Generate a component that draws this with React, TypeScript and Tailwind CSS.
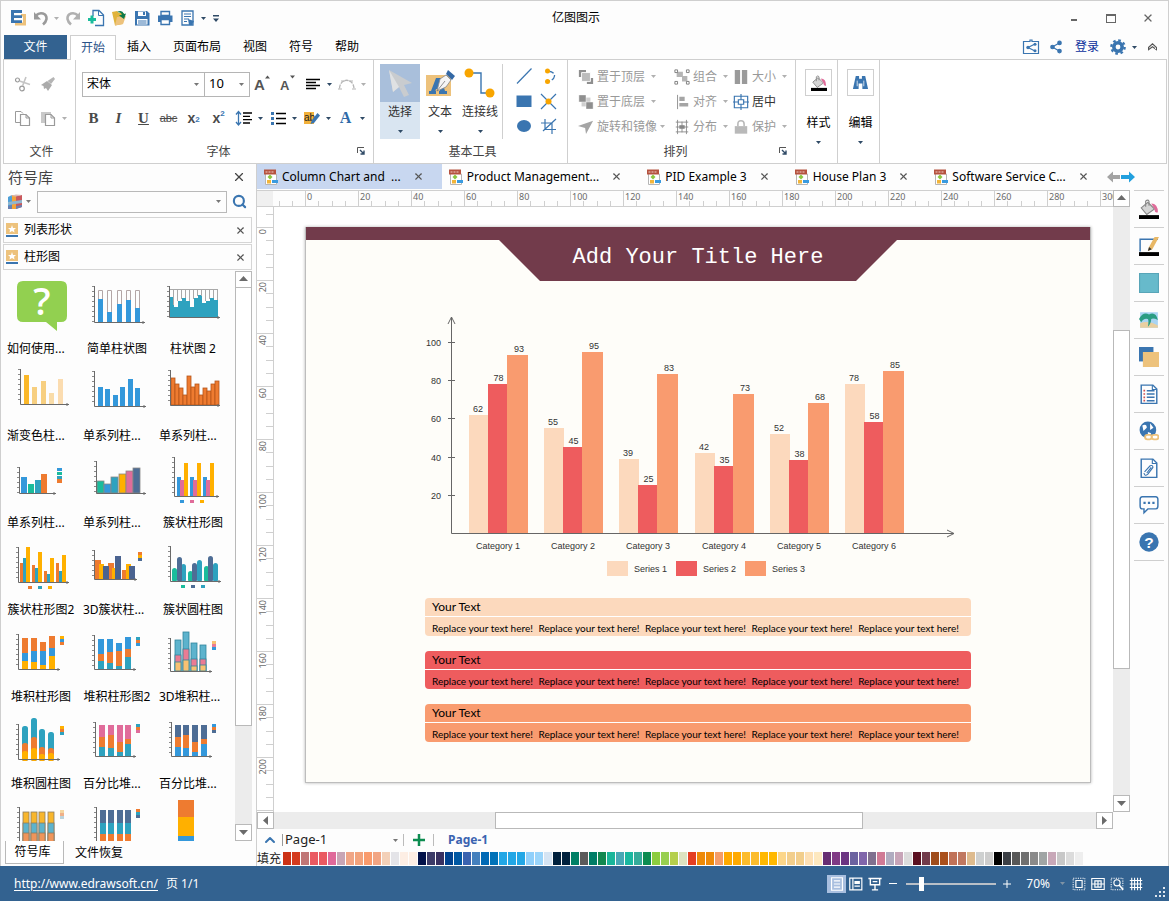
import { Fragment, useState } from 'react';
import type { ReactNode } from 'react';
import { ChevronUp, Search, Settings, Share2, X } from 'lucide-react';

const BLUE = '#3a75b0';
const GREY = '#9a9a9a';
const DARK = '#555555';

type Rect = [number, number, number, number, string];

function Caret({ className = 'text-[#2f4a66]' }: { className?: string }) {
  return (
    <svg width="5" height="3" viewBox="0 0 5 3" className={`shrink-0 ${className}`} aria-hidden="true">
      <path d="M0 0H5L2.5 3Z" fill="currentColor" />
    </svg>
  );
}

function Icon({ size = 18, children }: { size?: number; children: ReactNode }) {
  return (
    <svg width={size} height={size} viewBox="0 0 18 18" fill="none" className="shrink-0" aria-hidden="true">
      {children}
    </svg>
  );
}

function ToolButton({ label, children, className = 'w-[25px]' }: { label: string; children: ReactNode; className?: string }) {
  return (
    <button type="button" aria-label={label} className={`flex h-6 shrink-0 items-center justify-center ${className}`}>
      {children}
    </button>
  );
}

function CaretButton({ label, dim }: { label: string; dim?: boolean }) {
  return (
    <ToolButton label={label} className="w-[9px]">
      <Caret className={dim ? 'text-[#b0b0b0]' : 'text-[#2f4a66]'} />
    </ToolButton>
  );
}

/* ---------- title bar ---------- */

function TitleBar() {
  return (
    <header className="flex h-[34px] items-center text-xs text-black">
      <div className="flex flex-1 basis-0 items-center pl-[5px]">
        <span className="flex w-[23px] justify-center">
          <Icon>
            <path d="M12 5H17V16.500H6V13.500H14V7.500H12Z" fill="#edc27c" />
            <path d="M2 1H13V4H5V6.200H13V9H5V11.200H13V14H2Z" fill={BLUE} />
          </Icon>
        </span>
        <ToolButton label="撤销" className="w-[23px]">
          <Icon>
            <path d="M4 6.500C8 2.500 15 4 14.500 10Q14 13 11 15.500" stroke={GREY} strokeWidth="2.600" />
            <path d="M2 3V10.500H9Z" fill={GREY} />
          </Icon>
        </ToolButton>
        <CaretButton label="撤销列表" dim />
        <ToolButton label="重做" className="w-[23px]">
          <Icon>
            <path d="M14 6.500C10 2.500 3 4 3.500 10Q4 13 7 15.500" stroke="#b0b0b0" strokeWidth="2.600" />
            <path d="M16 3V10.500H9Z" fill="#b0b0b0" />
          </Icon>
        </ToolButton>
        <ToolButton label="新建" className="w-[23px]">
          <Icon>
            <path d="M6 7V1.500H12L16.500 6V16.500H8" stroke={BLUE} strokeWidth="1.300" />
            <path d="M11.500 1.500V6.500H16.500" stroke={BLUE} />
            <path d="M1 10.500H9M5 6.500V14.500" stroke="#1abc9c" strokeWidth="3" />
          </Icon>
        </ToolButton>
        <ToolButton label="打开" className="w-[23px]">
          <Icon>
            <path d="M2 3L7 2L9 4L14 4L13 15L5 16.500Z" fill="#e0b33c" />
            <path d="M5 16.500L7 8L16 7L13 15Z" fill="#edc27c" />
            <path d="M7 3Q12 0 14 5L16 4.500L14 10L9 6.500L12 5.500Q11 3 7 3Z" fill="#0d7a4a" />
          </Icon>
        </ToolButton>
        <ToolButton label="保存" className="w-[23px]">
          <Icon>
            <path d="M2 2H14L16.500 4.500V16.500H2Z" fill={BLUE} />
            <path d="M5 2.500H13V7H5Z" fill="white" />
            <path d="M10 3H12V6H10Z" fill={BLUE} />
            <path d="M4 10H14.500V15.500H4Z" fill="white" />
            <path d="M5 12H13.500M5 14H13.500" stroke={BLUE} />
          </Icon>
        </ToolButton>
        <ToolButton label="打印" className="w-[23px]">
          <Icon>
            <path d="M2 6.500H16.500V13H2Z" fill={BLUE} />
            <path d="M5 2.500H13.500V6.500H5Z" stroke={BLUE} strokeWidth="1.400" />
            <path d="M5 10.500H13.500V15.500H5Z" fill="white" stroke={BLUE} strokeWidth="1.400" />
          </Icon>
        </ToolButton>
        <ToolButton label="预览" className="w-[23px]">
          <Icon>
            <path d="M3 2H14V16H3Z" stroke={BLUE} strokeWidth="1.300" />
            <path d="M5 5H12M5 7.500H12M5 10H10M5 12.500H8" stroke={BLUE} />
            <path d="M9 10L15 12L13 16L10 16Z" fill={BLUE} />
          </Icon>
        </ToolButton>
        <CaretButton label="预览选项" />
        <ToolButton label="自定义快速访问工具栏" className="w-4">
          <svg width="6" height="7" viewBox="0 0 6 7" aria-hidden="true">
            <path d="M0 0H6V1.500H0ZM0 3.500H6L3 7Z" fill="#2f4a66" />
          </svg>
        </ToolButton>
      </div>
      <h1 className="mr-5">亿图图示</h1>
      <div className="flex flex-1 basis-0 items-center justify-end pr-[2px] text-[#666]">
        <button type="button" aria-label="最小化" className="flex w-[37px] justify-center"><span className="mt-[3px] h-[2px] w-[6px] bg-[#666]" /></button>
        <button type="button" aria-label="最大化" className="flex w-[37px] justify-center"><span className="h-[9px] w-[10px] border border-t-2 border-[#666]" /></button>
        <button type="button" aria-label="关闭" className="flex w-[37px] justify-center"><X size={12} strokeWidth={2.6} /></button>
      </div>
    </header>
  );
}

/* ---------- menu tabs ---------- */

const menus = ['开始', '插入', '页面布局', '视图', '符号', '帮助'];

function MenuTabs() {
  const [active, setActive] = useState('开始');
  return (
    <nav className="flex h-6 px-[3px] text-xs text-black">
      <button type="button" className="mr-[3px] w-[63px] bg-[#336290] text-white">文件</button>
      {menus.map(m => (
        <button
          key={m}
          type="button"
          onClick={() => setActive(m)}
          className={m === active
            ? 'relative z-10 -mb-px border border-b-0 border-[#cfcfcf] bg-white px-[10px] text-[#2b5288]'
            : 'px-[11px]'}
        >
          {m}
        </button>
      ))}
      <div className="ml-auto flex items-center">
        <ToolButton label="共享文件夹">
          <Icon>
            <path d="M1.500 3.500H8V2H10V3.500H16.500V15.500H1.500Z" stroke={BLUE} strokeWidth="1.200" />
            <path d="M13 6L6 9.500L13 13" stroke={BLUE} strokeWidth="1.200" />
            <circle cx="6" cy="9.500" r="1.700" fill={BLUE} /><circle cx="13" cy="6.200" r="1.500" fill={BLUE} /><circle cx="13" cy="12.800" r="1.500" fill={BLUE} />
          </Icon>
        </ToolButton>
        <ToolButton label="分享"><Share2 size={14} color={BLUE} fill={BLUE} /></ToolButton>
        <a href="#login" className="mx-[6px] text-[#0a2f9c]">登录</a>
        <ToolButton label="设置">
          <Icon size={16}>
            <circle cx="9" cy="9" r="4.700" stroke={BLUE} strokeWidth="4" />
            <circle cx="9" cy="9" r="7.500" stroke={BLUE} strokeWidth="2.600" strokeDasharray="2.950 2.940" />
          </Icon>
        </ToolButton>
        <CaretButton label="设置选项" />
        <ToolButton label="收起功能区" className="w-[26px]">
          <svg width="9" height="8" viewBox="0 0 9 8" fill="none" stroke="#555" strokeWidth="1.100" aria-hidden="true">
            <path d="M0.500 4.500L4.500 0.800L8.500 4.500V6.800L4.500 3.800L0.500 6.800Z" />
          </svg>
        </ToolButton>
      </div>
    </nav>
  );
}

/* ---------- ribbon ---------- */

function Launcher() {
  return (
    <button type="button" aria-label="更多设置" className="absolute right-2 bottom-2">
      <svg width="8" height="8" viewBox="0 0 8 8" fill="none" stroke="#555" aria-hidden="true">
        <path d="M0.500 6V0.500H7" /><path d="M3 3L7 7M7 3.500V7H3.500" stroke="#2f4a66" strokeWidth="1.400" />
      </svg>
    </button>
  );
}

function Group({ title, launcher, children }: { title?: string; launcher?: boolean; children: ReactNode }) {
  return (
    <section className="relative flex flex-col border-r border-[#cfcfcf]">
      <div className="h-[79px]">{children}</div>
      {title && <h2 className={`h-6 text-center text-xs leading-[26px] text-[#444] ${launcher ? 'pr-3' : 'pl-1'}`}>{title}</h2>}
      {launcher && <Launcher />}
    </section>
  );
}

function FileGroup() {
  return (
    <Group title="文件">
      <div className="flex w-[71px] flex-col pt-[7px] pl-[6px]">
        <div className="flex h-[34px] items-center">
          <ToolButton label="剪切">
            <Icon>
              <circle cx="3.500" cy="5" r="2" stroke={GREY} strokeWidth="1.200" /><circle cx="8" cy="13.500" r="2.300" stroke={GREY} strokeWidth="1.200" />
              <path d="M5.500 6L16 9.500M8.500 11L12 2" stroke="#c4c4c4" strokeWidth="1.600" />
            </Icon>
          </ToolButton>
          <ToolButton label="格式刷">
            <Icon>
              <path d="M14.500 2L16 4L12 9L8.500 6Z" fill="#b5b5b5" /><path d="M8 6L13 10L9 16L7 13L5 14L4.500 11L2 10Z" fill="#ababab" />
            </Icon>
          </ToolButton>
        </div>
        <div className="flex h-[34px] items-center">
          <ToolButton label="复制">
            <Icon>
              <path d="M6 13.500H1.500V2.500H7L9 4.500" stroke={GREY} /><path d="M6.500 5.500H12L15.500 9V16.500H6.500Z" stroke={GREY} strokeWidth="1.200" /><path d="M12 5.500V9H15.500" stroke={GREY} />
            </Icon>
          </ToolButton>
          <ToolButton label="粘贴">
            <Icon>
              <path d="M2 3H12V5H6V14H2Z" fill="#c9c9c9" /><path d="M6.500 5.500H12L15.500 9V16.500H6.500Z" fill="white" stroke={GREY} strokeWidth="1.200" /><path d="M12 5.500V9H15.500" stroke={GREY} />
            </Icon>
          </ToolButton>
          <CaretButton label="粘贴选项" dim />
        </div>
      </div>
    </Group>
  );
}

function Combo({ label, value, className }: { label: string; value: string; className: string }) {
  return (
    <div className={`relative flex items-center border border-[#b5b5b5] ${className}`}>
      <select aria-label={label} className="h-full w-full appearance-none bg-transparent pl-1 outline-none">
        <option>{value}</option>
      </select>
      <span className="pointer-events-none absolute right-[5px]"><Caret className="text-[#777]" /></span>
    </div>
  );
}

function FontGroup() {
  return (
    <Group title="字体" launcher>
      <div className="flex w-[297px] flex-col pt-[7px] pl-[5px] text-black">
        <div className="flex h-[34px] items-center pl-px">
          <Combo label="字体名称" value="宋体" className="h-[25px] w-[123px] text-xs" />
          <Combo label="字号" value="10" className="-ml-px h-[25px] w-[46px] text-[13px]" />
          <ToolButton label="增大字号">
            <Icon><text x="0" y="15" fontSize="15" fontWeight="bold" fontFamily="Liberation Sans" fill="#555">A</text><path d="M11 3.500L13.500 0.500L16 3.500Z" fill={DARK} /></Icon>
          </ToolButton>
          <ToolButton label="减小字号">
            <Icon><text x="1" y="15" fontSize="13" fontWeight="bold" fontFamily="Liberation Sans" fill="#555">A</text><path d="M11 0.500H16L13.500 3.500Z" fill={DARK} /></Icon>
          </ToolButton>
          <ToolButton label="对齐方式">
            <Icon><path d="M2 4.500H16M2 7.500H12M2 10.500H16M2 13.500H12" stroke="black" strokeWidth="1.300" /></Icon>
          </ToolButton>
          <CaretButton label="对齐选项" />
          <ToolButton label="弧形文字">
            <Icon><path d="M1.500 13.500C2 2.500 15.500 2.500 16 13.500" stroke="#b5b5b5" strokeWidth="1.300" strokeDasharray="4 1" /><path d="M0 14H4M14 14H18M3 6H7M11 6H15" stroke="#b5b5b5" /></Icon>
          </ToolButton>
          <CaretButton label="弧形选项" dim />
        </div>
        <div className="flex h-[34px] items-center font-['Liberation_Serif',serif] text-[15px] text-[#4a4a4a]">
          <ToolButton label="加粗"><b>B</b></ToolButton>
          <ToolButton label="倾斜"><b className="italic">I</b></ToolButton>
          <ToolButton label="下划线"><b className="font-semibold underline">U</b></ToolButton>
          <ToolButton label="删除线"><s className="font-['Liberation_Sans',sans-serif] text-[11px]">abc</s></ToolButton>
          <ToolButton label="下标"><b className="font-['Liberation_Sans',sans-serif] text-sm">x</b><sub className="font-['Liberation_Sans',sans-serif] text-[8px] font-bold text-[#3a75b0]">2</sub></ToolButton>
          <ToolButton label="上标"><b className="font-['Liberation_Sans',sans-serif] text-sm">x</b><sup className="font-['Liberation_Sans',sans-serif] text-[8px] font-bold text-[#3a75b0]">2</sup></ToolButton>
          <ToolButton label="行距">
            <Icon><path d="M3.500 3V15.500M1 5.500L3.500 2.500L6 5.500M1 13L3.500 16L6 13" stroke={BLUE} strokeWidth="1.300" /><path d="M8 4H17M8 7.300H15M8 10.600H17M8 14H15" stroke="black" strokeWidth="1.300" /></Icon>
          </ToolButton>
          <CaretButton label="行距选项" />
          <ToolButton label="项目符号">
            <Icon><path d="M2 3H5V6H2ZM2 8H5V11H2ZM2 13H5V16H2Z" fill={BLUE} /><path d="M7 4.500H17M7 9.500H17M7 14.500H17" stroke="black" strokeWidth="1.300" /></Icon>
          </ToolButton>
          <CaretButton label="项目符号选项" />
          <ToolButton label="突出显示">
            <Icon><path d="M1 3H11V15H1Z" fill="#f2b13a" /><text x="1" y="12" fontSize="10" fontFamily="Liberation Sans" fill="#222">ab</text><path d="M14.500 4L17 6.500L11 14L7.500 15L9 11Z" fill={BLUE} /></Icon>
          </ToolButton>
          <CaretButton label="突出显示选项" />
          <ToolButton label="字体颜色"><b className="text-base text-[#2f6aa8]">A</b></ToolButton>
          <CaretButton label="字体颜色选项" />
        </div>
      </div>
    </Group>
  );
}

function BigTool({ label, selected, children }: { label: string; selected?: boolean; children: ReactNode }) {
  return (
    <button type="button" aria-pressed={selected} className={`flex h-[75px] w-10 flex-col items-center text-xs text-[#333] ${selected ? 'bg-[#d9e5f1]' : ''}`}>
      <span className={`flex h-[38px] w-10 items-center justify-center ${selected ? 'bg-[#a9bfdb]' : ''}`}>{children}</span>
      <span className="mb-2 h-5 leading-5 whitespace-nowrap">{label}</span>
      <Caret />
    </button>
  );
}

function ToolsGroup() {
  return (
    <Group title="基本工具">
      <div className="flex w-[193px] pt-1 pl-[6px]">
        <BigTool label="选择" selected>
          <svg width="28" height="30" viewBox="0 0 28 30" aria-hidden="true">
            <path d="M3 2L26 15L18 17L23 27L18 29L13 19L7 24Z" fill="#c9cccf" /><path d="M3 2L7 24L13 19Z" fill="#dfe1e3" />
          </svg>
        </BigTool>
        <BigTool label="文本">
          <svg width="30" height="30" viewBox="0 0 30 30" aria-hidden="true">
            <path d="M1 7H26V28H1Z" fill="#edc27c" />
            <path d="M4 26V23H6L11 10H16L20 23H22V26H14V23H15L14.500 21H11L10.500 23H11V26Z" fill={BLUE} />
            <path d="M12 23L15 11L21 7L26 12L21 19Z" fill="#f5f5f5" stroke="#888" strokeWidth="0.800" />
            <path d="M12 23L20 13" stroke="#777" strokeWidth="0.800" /><path d="M23 2L30 8L27 12L21 6Z" fill="#3468a5" />
          </svg>
        </BigTool>
        <BigTool label="连接线">
          <svg width="32" height="32" viewBox="0 0 32 32" aria-hidden="true">
            <path d="M5 6H17V26H26" fill="none" stroke={BLUE} strokeWidth="1.400" />
            <circle cx="5" cy="6" r="4.500" fill="#f8a500" /><circle cx="26" cy="26" r="4.500" fill="#f8a500" />
          </svg>
        </BigTool>
        <div className="ml-[2px] grid grid-cols-2 border-l border-[#cfcfcf] pl-2">
          <ToolButton label="直线"><Icon><path d="M2 16.500L16.500 1.500" stroke={BLUE} strokeWidth="1.200" /></Icon></ToolButton>
          <ToolButton label="弧线">
            <Icon><path d="M8 4Q15 5 14.500 9Q14 13 8 14.500" stroke={BLUE} strokeWidth="1.300" strokeDasharray="6 2" /><circle cx="7.500" cy="4" r="2.500" fill="#f8a500" /><circle cx="7.500" cy="14.500" r="2.500" fill="#f8a500" /></Icon>
          </ToolButton>
          <ToolButton label="矩形"><Icon><path d="M1.500 3.500H16.500V15H1.500Z" fill={BLUE} /></Icon></ToolButton>
          <ToolButton label="连接点">
            <Icon><path d="M1 2L16 17M16 2L1 17" stroke={BLUE} strokeWidth="1.200" /><circle cx="8.500" cy="9.500" r="3" fill="#f8a500" /></Icon>
          </ToolButton>
          <ToolButton label="椭圆"><Icon><ellipse cx="9" cy="9" rx="7" ry="6" fill={BLUE} /></Icon></ToolButton>
          <ToolButton label="裁剪"><Icon><path d="M1 6H12V17M5 2V12.500H16M3 14L16 2" stroke={BLUE} strokeWidth="1.200" /></Icon></ToolButton>
        </div>
      </div>
    </Group>
  );
}

const arrangeRows: { label: string; on?: boolean; icon: ReactNode }[][] = [
  [
    { label: '置于顶层', icon: <><path d="M1 1H9V9H1ZM10 10H17V17H10Z" fill="#8f8f8f" /><path d="M4 4H14V14H4Z" fill="#bcbcbc" stroke="white" /></> },
    { label: '组合', icon: <><path d="M3 3H10V9H3ZM9 8H15V14H9Z" fill="#b5b5b5" /><path d="M1 1H4V4H1ZM14 1H17V4H14ZM1 14H4V17H1ZM14 14H17V17H14Z" fill="white" stroke="#777" /></> },
    { label: '大小', icon: <path d="M2 1H8V17H2ZM10 1H16V17H10Z" fill="#9a9a9a" /> },
  ],
  [
    { label: '置于底层', icon: <><path d="M4 4H14V14H4Z" fill="#cfcfcf" /><path d="M1 1H9V9H1ZM9 9H17V17H9Z" fill="#8f8f8f" stroke="white" strokeWidth="0.500" /></> },
    { label: '对齐', icon: <><path d="M4 1V17" stroke="#888" /><path d="M6 3H12V8H6ZM6 10H16V14H6Z" fill="#a5a5a5" /></> },
    { label: '居中', on: true, icon: <><path d="M1.500 2.500H16.500V15.500H1.500ZM6 6.500H12V11.500H6Z" stroke={BLUE} strokeWidth="1.300" /><path d="M9 0V6.500M9 11.500V18M0 9H6M12 9H18" stroke={BLUE} strokeWidth="1.300" /></> },
  ],
  [
    { label: '旋转和镜像', icon: <path d="M0 8L17 2L9 17L8 10Z" fill="#a5a5a5" /> },
    { label: '分布', icon: <><path d="M2 3.500H16M2 14.500H16M4 1V17M14 1V17" stroke="#888" /><path d="M6 7H12V11H6Z" fill="#888" /><path d="M9 3V15M2 9H16" stroke="#888" /></> },
    { label: '保护', icon: <><path d="M2 8H16V16.500H2Z" fill="#b9b9b9" /><path d="M5.500 8V5.500Q5.500 2 9 2Q12.500 2 12.500 5.500V8" stroke="#b9b9b9" strokeWidth="1.800" /></> },
  ],
];

function ArrangeGroup() {
  return (
    <Group title="排列" launcher>
      <div className="grid w-[227px] grid-cols-[96px_59px_62px] pt-1 pl-[10px]">
        {arrangeRows.flat().map(item => (
          <button key={item.label} type="button" className={`flex h-[25px] items-center gap-[3px] text-xs whitespace-nowrap ${item.on ? 'text-[#333]' : 'text-[#999]'}`}>
            <Icon size={16}>{item.icon}</Icon>
            {item.label}
            {!item.on && <Caret className={item.label.length > 4 ? 'text-[#b0b0b0]' : 'ml-[3px] text-[#b0b0b0]'} />}
          </button>
        ))}
      </div>
    </Group>
  );
}

function BucketArt() {
  return (
    <>
      <path d="M2 8L8 3L14 9L7 14Z" fill="#d5d5d5" stroke="#888" />
      <path d="M6 7V2Q8 0 9 2V6" stroke="#888" />
      <path d="M11 4Q17 4 17 12Q14 13 14 9Z" fill="#e06c9a" />
      <path d="M0 14.500H18V18H0Z" fill="black" />
    </>
  );
}

function SideGroup({ label, children }: { label: string; children: ReactNode }) {
  return (
    <Group>
      <button type="button" className="flex w-[41px] flex-col items-center pt-[9px] text-xs text-black">
        <span className="ml-1 flex size-[27px] items-center justify-center border border-[#cfcfcf]">{children}</span>
        <span className="mt-[17px] mb-2 ml-1 h-5 leading-5">{label}</span>
        <span className="ml-1"><Caret /></span>
      </button>
    </Group>
  );
}

function Ribbon() {
  return (
    <div className="mr-[1px] ml-[2px] flex border border-[#cfcfcf] bg-white">
      <FileGroup />
      <FontGroup />
      <ToolsGroup />
      <ArrangeGroup />
      <SideGroup label="样式"><Icon size={16}><BucketArt /></Icon></SideGroup>
      <SideGroup label="编辑">
        <Icon size={17}><path d="M4 2H7.500V5H10.500V2H14L17 16H11V10H7V16H1Z" fill={BLUE} /><path d="M5.500 7V13M12.500 7V13" stroke="white" strokeWidth="0.800" /></Icon>
      </SideGroup>
    </div>
  );
}

/* ---------- symbol library ---------- */

const B = '#3498db', T = '#2ea2bf', O = '#ee7b30', Y = '#ffb000', P = '#e06c9a', N = '#4e6d95', G = '#1abc9c';

type Thumb = { label: string; axis?: [number, number, number, number]; rects?: Rect[]; round?: boolean; stroke?: string; art?: ReactNode };

// a row of plain bars standing on one base line
function bars(xs: number[], tops: number[], base: number, w: number, fill: string | string[]): Rect[] {
  return xs.map((x, i) => [x, tops[i], w, base - tops[i], typeof fill === 'string' ? fill : fill[i]]);
}

// bars cut into layers, each layer given by its tops
function stacks(xs: number[], layers: [string, number[]][], base: number): Rect[] {
  return layers.flatMap(([fill, tops]) => bars(xs, tops, base, 6, fill));
}

function legend(x: number, y: number, fills: string[], down = true): Rect[] {
  return fills.map((f, i) => (down ? [x, y + i * 3, 4, 3, f] : [x + i * 10, y, 4, 3, f]) as Rect);
}

const steps = (from: number, step: number, n: number) => Array.from({ length: n }, (_, i) => from + i * step);

const thumbs: Thumb[] = [
  {
    label: '如何使用...',
    art: (
      <>
        <path d="M20 6H58Q64 6 64 12V41Q64 47 58 47H54V56L43 47H20Q14 47 14 41V12Q14 6 20 6Z" fill="#92d050" />
        <text x="39" y="40" fontSize="38" fontFamily="Open Sans" fontWeight="600" textAnchor="middle" fill="white">?</text>
      </>
    ),
  },
  {
    label: '简单柱状图', axis: [15, 11, 66, 47],
    rects: bars([19, 28, 38, 47, 56], [24, 37, 29, 25, 33], 47, 5, B),
    art: <path d="M19.500 24V15.500H23.500V24M28.500 37V15.500H32.500V37M38.500 29V15.500H42.500V29M47.500 25V15.500H51.500V25M56.500 33V15.500H60.500V33" stroke="#b3a6a6" fill="none" />,
  },
  {
    label: '柱状图 2', axis: [14, 11, 65, 42],
    rects: bars(steps(15, 4, 12), [22, 32, 26, 23, 26, 32, 23, 20, 28, 26, 23, 25], 42, 4, T),
    art: <path d="M15 14.500H63M18.500 14V30M22.500 14V26M26.500 14V24M30.500 14V23M34.500 14V26M38.500 14V24M42.500 14V21M46.500 14V21M50.500 14V26M54.500 14V24M58.500 14V23M62.500 14V25" stroke="#a9a9a9" />,
  },
  { label: '渐变色柱...', axis: [17, 7, 66, 42], rects: bars([21, 29, 38, 46, 55], [13, 25, 19, 31, 17], 42, 5, ['#fbb829', '#f7cf80', '#f7cf80', '#f9dca8', '#fbdcb0']) },
  { label: '单系列柱...', axis: [15, 9, 67, 44], rects: bars([19, 26, 34, 41, 49, 56], [25, 27, 33, 25, 17, 26], 44, 5, B) },
  { label: '单系列柱...', axis: [15, 8, 65, 43], stroke: '#b4551a', rects: bars(steps(16, 4, 12), [16, 22, 26, 33, 14, 25, 22, 33, 26, 29, 22, 19], 43, 4, O) },
  {
    label: '单系列柱...', axis: [16, 18, 53, 44],
    rects: [...bars([18, 25, 32, 38], [28, 35, 31, 25], 44, 6, [B, G, T, O]), [54, 19, 5, 3, B], [54, 23, 5, 3, G], [54, 27, 5, 3, T], [54, 30, 5, 4, O]],
  },
  { label: '单系列柱...', axis: [17, 12, 67, 44], stroke: '#888888', rects: bars([18, 25, 32, 40, 47, 54], [32, 35, 28, 25, 22, 19], 44, 7, [G, B, T, Y, P, N]) },
  {
    label: '簇状柱形图', axis: [19, 8, 64, 47],
    rects: [...bars([22, 35, 48], [28, 28, 28], 47, 4, B), ...bars([25, 38, 51], [31, 31, 31], 47, 4, P), ...bars([29, 42, 55], [14, 14, 14], 47, 4, Y), ...legend(25, 51, [B, P, Y], false)],
  },
  {
    label: '簇状柱形图2', axis: [15, 11, 66, 46],
    rects: [...bars([17, 29, 41, 53], [27, 29, 35, 27], 46, 3, O), ...bars([20, 32, 44, 56], [22, 32, 38, 35], 46, 3, T), ...bars([23, 35, 47, 59], [11, 16, 22, 19], 46, 4, Y), ...legend(25, 50, [O, T, Y], false)],
  },
  {
    label: '3D簇状柱...', axis: [15, 14, 58, 43],
    rects: [...bars([16, 29, 43], [24, 27, 34], 43, 6, O), ...bars([20, 33, 47], [28, 32, 28], 43, 5, Y), ...bars([24, 36, 50], [30, 20, 30], 43, 6, '#4a6390'), ...legend(59, 16, [O, Y, N])],
  },
  {
    label: '簇状圆柱图', axis: [15, 10, 66, 45], round: true,
    rects: [...bars([17, 33, 49], [32, 35, 30], 46, 5, G), ...bars([26, 42, 58], [28, 24, 27], 46, 5, T), ...bars([22, 37, 53], [21, 27, 20], 46, 5, N), ...legend(26, 49, [G, N, T], false)],
  },
  { label: '堆积柱形图', axis: [15, 11, 57, 46], rects: [...stacks([19, 28, 37, 46], [[O, [15, 15, 19, 13]], [B, [30, 28, 28, 25]], [Y, [38, 39, 42, 33]]], 46), ...legend(57, 13, [Y, B, O])] },
  { label: '堆积柱形图2', axis: [15, 12, 57, 46], rects: [...stacks([19, 28, 37, 46], [[B, [16, 16, 20, 14]], [O, [31, 29, 28, 26]], [T, [38, 40, 43, 34]]], 46), ...legend(57, 14, [T, O, B])] },
  {
    label: '3D堆积柱...', axis: [15, 15, 57, 48], stroke: '#31849c',
    rects: [...stacks([20, 28, 36, 45], [['#5db3cd', [17, 9, 20, 22]], ['#ea7b93', [32, 26, 36, 36]], ['#f8c172', [39, 37, 43, 42]]], 48), ...legend(57, 18, ['#f8c172', '#ea7b93', B])],
  },
  { label: '堆积圆柱图', axis: [15, 14, 57, 49], round: true, rects: [...stacks([19, 28, 36, 45], [[T, [16, 8, 19, 22]], [O, [33, 27, 37, 38]], [Y, [41, 38, 44, 43]]], 51), ...legend(57, 16, [Y, O, T])] },
  { label: '百分比堆...', axis: [16, 12, 57, 46], rects: [...stacks([20, 29, 38, 46], [[P, [15, 15, 15, 15]], [O, [27, 25, 32, 29]], [T, [37, 38, 42, 34]]], 46), ...legend(57, 14, [T, O, P])] },
  { label: '百分比堆...', axis: [16, 12, 57, 46], rects: [...stacks([20, 28, 37, 46], [[N, [15, 15, 15, 15]], [O, [27, 25, 32, 29]], [B, [37, 38, 42, 34]]], 46), ...legend(57, 14, [B, O, N])] },
  { label: '', axis: [16, 10, 57, 58], stroke: '#8a7c60', rects: [...stacks([20, 28, 36, 45], [['#f8b62d', [15, 15, 15, 15]], ['#5db3cd', [26, 26, 26, 26]], ['#f0955a', [36, 36, 36, 36]]], 58), ...legend(57, 13, ['#f5d6a0', '#f0b088', '#bcd3dc'])] },
  { label: '', axis: [17, 10, 57, 58], rects: [...stacks([21, 29, 38, 46], [[N, [13, 13, 13, 13]], [T, [26, 26, 26, 26]], [O, [37, 37, 37, 37]]], 58), ...legend(57, 12, [O, T, N])] },
  { label: '', rects: [[23, 3, 16, 17, O], [23, 20, 16, 19, Y], [23, 39, 16, 20, B]] },
];

function ThumbArt({ thumb }: { thumb: Thumb }) {
  const { axis, rects = [], round, stroke, art } = thumb;
  return (
    <svg width="76" height="64" viewBox="0 0 76 64" fill="none" aria-hidden="true">
      {rects.map(([x, y, w, h, fill], i) => (
        <rect key={i} x={x} y={y} width={w} height={h} rx={round && w > 4 ? 2.5 : 0} fill={fill} stroke={stroke && w * h > 20 ? stroke : undefined} strokeWidth="0.8" />
      ))}
      {axis && (
        <>
          <path d={`M${axis[0] + 0.5} ${axis[1]}V${axis[3] + 0.5}H${axis[2]}M${axis[2] - 2} ${axis[3] - 1}V${axis[3] + 2}`} stroke="#6a6a6a" />
          <path d={`M${axis[0] - 1} ${axis[1]}V${axis[3]}`} stroke="#8a8a8a" strokeWidth="2" strokeDasharray="1 4" />
        </>
      )}
      {art}
    </svg>
  );
}

function Arrow({ dir }: { dir: 'up' | 'down' | 'left' | 'right' }) {
  const d = { up: 'M0 6H9L4.500 1Z', down: 'M0 2H9L4.500 7Z', left: 'M7 0V9L2 4.500Z', right: 'M2 0V9L7 4.500Z' }[dir];
  return (
    <button type="button" aria-label={dir} className="flex size-[17px] shrink-0 items-center justify-center border border-[#b9b9b9] bg-white">
      <svg width="9" height="9" viewBox="0 0 9 9" aria-hidden="true"><path d={d} fill="#6b6b6b" /></svg>
    </button>
  );
}

function LibraryHeader({ title }: { title: string }) {
  return (
    <div className="ml-[2px] mr-[4px] mb-px flex h-[26px] items-center border border-[#d5d5d5] pr-[5px] pl-[2px] text-xs text-black">
      <svg width="12" height="14" viewBox="0 0 12 14" aria-hidden="true">
        <path d="M0 0H12V11H0Z" fill="#edc27c" /><path d="M0 12H12V14H0Z" fill={BLUE} />
        <path d="M6 2L7 5H10L8 6.800L8.500 9.500L6 8L3.500 9.500L4 6.800L2 5H5Z" fill="white" />
      </svg>
      <span className="ml-[6px]">{title}</span>
      <button type="button" aria-label={`关闭${title}`} className="ml-auto text-[#555]"><X size={11} strokeWidth={2.4} /></button>
    </div>
  );
}

function LibraryPanel() {
  return (
    <aside className="flex w-[255px] shrink-0 flex-col">
      <div className="flex h-[26px] items-center pr-[10px] pl-[7px] text-[#444]">
        <h2 className="text-[15px]">符号库</h2>
        <button type="button" aria-label="关闭符号库" className="ml-auto"><X size={14} strokeWidth={2} /></button>
      </div>
      <div className="mb-1 flex h-[23px] items-center pl-[6px]">
        <button type="button" aria-label="打开符号库" className="flex items-center gap-[3px]">
          <svg width="16" height="16" viewBox="0 0 16 16" aria-hidden="true">
            <path d="M1 3L5 1V15H1Z" fill="#4ea0d8" /><path d="M5 1H9V15H5Z" fill="#f2a33a" /><path d="M9 2L15 1V13L9 15Z" fill="#c9585c" />
            <path d="M1 8L15 6V9L1 11Z" fill="#8fb6cf" /><path d="M1 12L5 11V15H1ZM9 12L15 11V13L9 15Z" fill="#6a7fb0" />
            <path d="M3 2L9 0.500L15 1L9 2.500Z" fill="#d8b9b4" />
          </svg>
          <Caret className="text-[#777]" />
        </button>
        <div className="relative ml-[6px] flex h-[22px] flex-1 items-center border border-[#b9b9b9]">
          <input type="text" aria-label="搜索符号" className="h-full w-full px-1 text-xs outline-none" />
          <span className="pointer-events-none absolute right-[5px]"><Caret className="text-[#777]" /></span>
        </div>
        <button type="button" aria-label="搜索" className="mr-1 flex w-[25px] justify-center text-[#3a75b0]"><Search size={15} strokeWidth={3.4} /></button>
      </div>
      <LibraryHeader title="列表形状" />
      <LibraryHeader title="柱形图" />
      <div className="mr-[4px] flex min-h-0 flex-1">
        <ul className="grid flex-1 auto-rows-[87px] grid-cols-[76px_76px_76px] overflow-hidden pt-1 pl-[2px] text-xs text-black">
          {thumbs.map((t, i) => (
            <li key={i} className="text-center">
              <ThumbArt thumb={t} />
              <p className={`h-5 leading-5 whitespace-nowrap ${t.label.endsWith('...') ? 'pl-1 text-left' : ''}`}>{t.label}</p>
            </li>
          ))}
        </ul>
        <div className="flex w-[17px] flex-col bg-[#ececec]">
          <Arrow dir="up" />
          <div className="grow-[438] border border-t-0 border-[#b9b9b9] bg-white" />
          <div className="grow-[98]" />
          <Arrow dir="down" />
        </div>
      </div>
      <div className="flex h-[25px] text-xs text-black">
        <button type="button" className="mb-[2px] ml-1 w-[59px] border border-t-0 border-[#b9b9b9] bg-white pr-1">符号库</button>
        <button type="button" className="mb-[2px] px-[11px]">文件恢复</button>
      </div>
    </aside>
  );
}

/* ---------- documents ---------- */

const docs = ['Column Chart and  ...', 'Product Management...', 'PID Example 3', 'House Plan 3', 'Software Service C...'];

function DocTabs() {
  const [active, setActive] = useState(0);
  return (
    <div className="flex h-[26px] items-stretch pb-px text-xs text-black">
      {docs.map((d, i) => (
        <div key={d} className={`flex items-center pr-[18px] pl-[7px] ${i === active ? 'bg-[#c8d7f0]' : ''}`}>
          <button type="button" onClick={() => setActive(i)} className="flex items-center gap-1 whitespace-pre">
            <svg width="14" height="16" viewBox="0 0 14 16" aria-hidden="true">
              <path d="M1.500 3H10L12.500 5V15.500H1.500Z" fill="white" stroke="#b5b5b5" />
              <path d="M0 0.500H12V5.500H0Z" fill="#b5523f" /><path d="M1.500 3H10.500" stroke="#f0d0c8" strokeDasharray="2 1" />
              <path d="M6 5.500L8.500 8L6 10.500L3.500 8Z" fill="#8cc63f" /><path d="M3 11H7V14.500H3Z" fill="#f2b53a" /><path d="M8 11H14V14H8Z" fill="#3a9be0" />
            </svg>
            {d}
          </button>
          <button type="button" aria-label={`关闭 ${d}`} className="ml-3 text-[#555]"><X size={11} strokeWidth={2.4} /></button>
        </div>
      ))}
      <button type="button" aria-label="切换文档" className="ml-auto flex items-center pr-[2px]">
        <svg width="28" height="12" viewBox="0 0 28 12" aria-hidden="true">
          <path d="M0 6L6 0.500V4H13V8H6V11.500Z" fill="#a3a3a3" /><path d="M28 6L22 0.500V4H14V8H22V11.500Z" fill="#22a0de" />
        </svg>
      </button>
    </div>
  );
}

const STEP = 13.25;

function TopRuler() {
  return (
    <svg className="h-full min-w-0 flex-1" fill="#6b6b6b" fontFamily="Noto Sans" fontSize="9" aria-hidden="true">
      {steps(-2, 1, 63).map(n => {
        const x = Math.round(32 + n * STEP) + 0.5;
        const major = n % 4 === 0 && n >= 0;
        return (
          <Fragment key={n}>
            <path d={`M${x} ${major ? 0 : 10}V17`} stroke="#cfcfcf" />
            {major && <text x={x + 1.5} y="9">{n * 5}</text>}
          </Fragment>
        );
      })}
    </svg>
  );
}

function SideRuler() {
  return (
    <svg className="w-[17px] shrink-0 self-stretch border-r border-[#cfcfcf]" fill="#6b6b6b" fontFamily="Noto Sans" fontSize="9" aria-hidden="true">
      {steps(-1, 1, 46).map(n => {
        const y = Math.round(20 + n * STEP) + 0.5;
        const major = n % 4 === 0 && n >= 0;
        return (
          <Fragment key={n}>
            <path d={`M${major ? 0 : 9} ${y}H17`} stroke="#cfcfcf" />
            {major && <text transform={`translate(9 ${y + 1.5}) rotate(-90)`} textAnchor="end">{n * 5}</text>}
          </Fragment>
        );
      })}
    </svg>
  );
}

const seriesFill = ['#fcd9bd', '#ee5c5e', '#f99b6f'];
const chartData = [[62, 78, 93], [55, 45, 95], [39, 25, 83], [42, 35, 73], [52, 38, 68], [78, 58, 85]];

function Chart() {
  const base = 223;
  const y = (v: number) => Math.round(base - v * 1.91);
  return (
    <svg viewBox="0 0 546 270" className="mt-[29px] w-full" fontFamily="Liberation Sans" fontSize="9" fill="#333">
      {chartData.map((row, i) => (
        <g key={i}>
          {row.map((v, j) => (
            <Fragment key={j}>
              <rect x={44 + Math.round(i * 75.2) + j * 19} y={y(v)} width={j === 2 ? 21 : 20} height={base - y(v)} fill={seriesFill[j]} />
              <text x={53 + Math.round(i * 75.2) + j * 20.5} y={y(v) - 3} textAnchor="middle">{v}</text>
            </Fragment>
          ))}
          <text x={73 + Math.round(i * 75.2)} y="239" textAnchor="middle">Category {i + 1}</text>
        </g>
      ))}
      {[20, 40, 60, 80, 100].map(v => (
        <g key={v}>
          <path d={`M23 ${y(v) + 0.5}H30`} stroke="#666" />
          <text x="16" y={y(v) + 4} textAnchor="end">{v}</text>
        </g>
      ))}
      <path d="M26.500 7V223.500H529M23 14L26.500 7L30 14M522 220L529 223.500L522 227" fill="none" stroke="#666" />
      {seriesFill.map((f, i) => (
        <g key={f}>
          <rect x={182 + i * 69} y="251" width="21" height="15" fill={f} />
          <text x={209 + i * 69} y="262">Series {i + 1}</text>
        </g>
      ))}
    </svg>
  );
}

const cards = ['bg-[#fcd9bd]', 'bg-[#ee5c5e]', 'bg-[#f99b6f]'];

function Sheet() {
  return (
    <article className="flex flex-1 flex-col self-start border border-t-0 border-[#bdbdbd] bg-[#fefdf9] pb-10 shadow-[0_0_3px_rgba(0,0,0,0.3)]">
      <div className="h-[13px] bg-[#723b4b]" />
      <h2 className="mx-auto h-[41px] w-[398px] bg-[#723b4b] text-center font-['Liberation_Mono',monospace] text-[22px] leading-9 whitespace-nowrap text-white [clip-path:polygon(0_0,100%_0,calc(100%-41px)_100%,41px_100%)]">
        Add Your Title Here
      </h2>
      <div className="mx-auto w-full max-w-[546px]">
        <Chart />
        <div className="mt-[18px] flex flex-col gap-[15px] font-[Lato,sans-serif] text-black">
          {cards.map(c => (
            <section key={c} className={`overflow-hidden rounded-[4px] pr-3 pl-[7px] ${c}`}>
              <h3 className="-mr-3 -ml-[7px] h-[19px] border-b border-white pl-[7px] text-xs leading-[18px]">Your Text</h3>
              <div className="flex h-[19px] items-center justify-between pt-[3px] text-[10px] leading-3 whitespace-nowrap">
                {steps(0, 1, 5).map(n => <span key={n}>Replace your text here!</span>)}
              </div>
            </section>
          ))}
        </div>
      </div>
    </article>
  );
}

const palette = [
  '#cb3216', '#d43b1e', '#c07676', '#ea5a62', '#ea5a62', '#e0699a', '#c8a5b5', '#f0a585', '#f2a37c', '#f99b6c', '#f2a583', '#f3d0b8', '#e4e4e8', '#fdeee4', '#fdeee4',
  '#02124a', '#3c3b68', '#383060', '#00428f', '#0058a3', '#3a63b0', '#4580bd', '#0069b5', '#0072b8', '#22a7e6', '#22a7e6', '#22a7e6', '#90d0fb', '#9ad5fb', '#d5e4f3',
  '#00213d', '#00213d', '#008066', '#5b5b5b', '#007d66', '#12884f', '#1ab69a', '#48a8b5', '#1ab8a0', '#35ab9a', '#0c8c50', '#8ccd3f', '#98cf50', '#b5cf4c', '#dde2c0',
  '#e43f22', '#ee8a08', '#ee8a08', '#f49d69', '#ffaa00', '#ffaa00', '#fcbc2c', '#fcbc2c', '#ffb800', '#ffb800', '#fcd68a', '#f2ce8c', '#f2ce8c', '#fde0b5', '#fde8bf',
  '#662d72', '#803a85', '#6c3582', '#6c63a0', '#8066ab', '#80708f', '#d07a95', '#b0acc0', '#c8a5b8', '#dcdcdc', '#5a1020', '#723b4b', '#a04d1c', '#aa501c', '#c07258', '#c07860',
  '#debb8e', '#ced0d0', '#cdcdcd', '#000000', '#3c4046', '#585858', '#707070', '#8a8a8a', '#a0a5a5', '#c8a8b8', '#c8c8c8', '#dcdcdc', '#eeeeee',
];

function Workspace() {
  return (
    <main className="flex min-w-0 flex-1 flex-col border-l border-[#cfcfcf]">
      <DocTabs />
      <div className="flex min-h-0 flex-1">
        <div className="flex min-w-0 flex-1 flex-col">
          <div className="flex h-[17px] border-t border-b border-[#cfcfcf]">
            <span className="w-4 bg-[#f0f0f0]" />
            <TopRuler />
          </div>
          <div className="flex min-h-0 flex-1 overflow-hidden bg-white">
            <SideRuler />
            <div className="flex flex-1 pt-5 pr-[22px] pl-[31px]"><Sheet /></div>
          </div>
          <div className="flex h-[17px] bg-[#ececec]">
            <Arrow dir="left" />
            <div className="grow-[222]" />
            <div className="grow-[367] border border-[#b9b9b9] bg-white" />
            <div className="grow-[234]" />
            <Arrow dir="right" />
          </div>
        </div>
        <div className="mb-[17px] flex w-[17px] flex-col bg-[#ececec]">
          <Arrow dir="up" />
          <div className="grow-[123]" />
          <div className="grow-[339] border border-[#b9b9b9] bg-white" />
          <div className="grow-[126]" />
          <Arrow dir="down" />
        </div>
      </div>
      <div className="flex h-[22px] items-center text-xs text-[#222]">
        <button type="button" aria-label="展开页面" className="flex w-[25px] justify-center text-[#3a75b0]"><ChevronUp size={16} strokeWidth={3} /></button>
        <div className="relative flex w-[121px] items-center">
          <span className="h-3 w-px bg-[#999]" />
          <select aria-label="页面" className="h-5 w-full appearance-none bg-transparent pl-[2px] text-[13px] outline-none"><option>Page-1</option></select>
          <span className="pointer-events-none absolute right-[5px]"><Caret className="text-[#777]" /></span>
        </div>
        <button type="button" aria-label="新建页面" className="flex h-3 w-[31px] items-center justify-center border-r border-l border-[#bbb]">
          <svg width="12" height="12" viewBox="0 0 12 12" aria-hidden="true"><path d="M6 0V12M0 6H12" stroke="#0c8c50" strokeWidth="2.500" /></svg>
        </button>
        <button type="button" className="ml-[14px] font-bold text-[#3a63b0]">Page-1</button>
      </div>
      <div className="flex h-[15px] items-center overflow-hidden text-xs text-[#222]">
        <span className="w-[26px] shrink-0 leading-[15px]">填充</span>
        {palette.map((c, i) => (
          <button key={i} type="button" aria-label={`填充颜色 ${c}`} className="mr-px h-[13px] w-2 shrink-0" style={{ backgroundColor: c }} />
        ))}
      </div>
    </main>
  );
}

/* ---------- right tool strip ---------- */

const strip: { label: string; art: ReactNode }[] = [
  { label: '填充', art: <BucketArt /> },
  { label: '线条', art: <><path d="M1 14V3H17" stroke={BLUE} strokeWidth="1.300" /><path d="M14 1L18 1L12 12L8 13.500L9 10Z" fill="#e8b765" /><path d="M8 13.500L9 10L11.500 12Z" fill="#333" /><path d="M0 14.500H18V18H0Z" fill="black" /></> },
  { label: '阴影', art: <path d="M0.500 0.500H17.500V17.500H0.500Z" fill="#67bacb" stroke="#58a5b8" /> },
  { label: '图片', art: <><path d="M1 2H17V16H1Z" fill="#a9d4f2" /><path d="M1 12Q8 9 17 14V16H1Z" fill="#e8cfa0" /><path d="M0 8Q4 1 9 4Q15 1 17 9Q13 7 11 8Q11 12 8 15Q9 9 8 8Q4 7 2 11Z" fill="#2a9d83" /></> },
  { label: '图层', art: <><path d="M0 0H13V13H0Z" fill={BLUE} /><path d="M3.500 4.500H18V18H3.500Z" fill="#edc27c" /></> },
  { label: '属性', art: <><path d="M2 1H12.500L16 4.500V17.500H2Z" stroke={BLUE} strokeWidth="1.300" /><path d="M12 1V5H16" stroke={BLUE} /><path d="M4 6H5.500M4 9H5.500M4 12H5.500M4 15H5.500" stroke="#d05050" strokeWidth="1.500" /><path d="M7 6H14M7 9H14M7 12H14M7 15H14" stroke={BLUE} strokeWidth="1.400" /></> },
  { label: '超链接', art: <><circle cx="8" cy="8" r="7.500" fill={BLUE} /><path d="M3 4Q7 2 7 6L4 9ZM10 2L13 6L10 8ZM8 10L11 11L8 15Z" fill="white" /><rect x="5.500" y="12.500" width="6" height="4" rx="2" fill="white" stroke="#edc27c" strokeWidth="1.700" /><rect x="11.500" y="12.500" width="6" height="4" rx="2" fill="white" stroke="#edc27c" strokeWidth="1.700" /></> },
  { label: '附件', art: <><path d="M2 1H12.500L16 4.500V17.500H2Z" stroke={BLUE} strokeWidth="1.300" /><path d="M12 1V5H16" stroke={BLUE} /><path d="M5 12.500L10 7Q12.500 6 12.500 8.500L8 14.500Q5 17 4.500 13.500M7 13.500L11 8.500M8 14.500L9 13" stroke={BLUE} /></> },
  { label: '注释', art: <><path d="M3 1.500H15Q17 1.500 17 4V10Q17 12.500 15 12.500H8L4.500 16V12.500H3Q1 12.500 1 10V4Q1 1.500 3 1.500Z" stroke={BLUE} strokeWidth="1.300" /><path d="M4 6H6V8H4ZM8 6H10V8H8ZM12 6H14V8H12Z" fill={BLUE} /></> },
  { label: '帮助', art: <><circle cx="9" cy="9" r="8.700" fill={BLUE} /><text x="9" y="14" fontSize="14" fontWeight="bold" fontFamily="Liberation Sans" textAnchor="middle" fill="white">?</text></> },
];

function ToolStrip() {
  return (
    <aside className="flex w-[38px] shrink-0 flex-col items-center pt-[26px]">
      {strip.map(s => (
        <button key={s.label} type="button" aria-label={s.label} className="flex h-[37px] w-[30px] items-center justify-center border-t border-[#cfcfcf]">
          <Icon size={20}>{s.art}</Icon>
        </button>
      ))}
      <hr className="w-[30px] border-[#cfcfcf]" />
    </aside>
  );
}

/* ---------- status bar ---------- */

function StatusBar() {
  const [zoom, setZoom] = useState(15);
  return (
    <footer className="relative flex h-[35px] shrink-0 items-center bg-[#336290] pr-6 pl-[14px] text-xs text-white">
      <a href="http://www.edrawsoft.cn/" className="mr-2 underline underline-offset-2">http://www.edrawsoft.cn/</a>
      <span>页 1/1</span>
      <div className="ml-auto flex items-center">
        <ToolButton label="普通视图" className="w-[19px]">
          <span className="flex h-[18px] w-[19px] items-center justify-center bg-[#a9bfdf]">
            <Icon size={14}><path d="M2 1H16V17H2Z" stroke="white" strokeWidth="1.500" /><path d="M5 5H13M5 9H13M5 13H13" stroke="white" strokeWidth="1.500" /></Icon>
          </span>
        </ToolButton>
        <ToolButton label="页面视图" className="w-[19px]">
          <Icon size={14}><path d="M1 1.500H16.500V16.500H1ZM5 1.500V16.500" stroke="white" strokeWidth="1.500" /><path d="M7 5H14V9H7ZM7 11H14V12.500H7Z" fill="white" /></Icon>
        </ToolButton>
        <ToolButton label="演示" className="w-[19px]">
          <Icon size={14}><path d="M0.500 2H17.500M3 2V10H15V2M9 10V16M5 16.500H13M6 6H12" stroke="white" strokeWidth="1.800" /></Icon>
        </ToolButton>
        <ToolButton label="缩小" className="w-[18px]"><span className="h-px w-2 bg-white" /></ToolButton>
        <input
          type="range"
          aria-label="缩放"
          value={zoom}
          onChange={e => setZoom(Number(e.target.value))}
          className="mx-1 h-4 w-[90px] appearance-none bg-transparent [&::-webkit-slider-runnable-track]:h-[2px] [&::-webkit-slider-runnable-track]:bg-[#b9bfc7] [&::-webkit-slider-thumb]:-mt-[6px] [&::-webkit-slider-thumb]:h-[14px] [&::-webkit-slider-thumb]:w-[5px] [&::-webkit-slider-thumb]:appearance-none [&::-webkit-slider-thumb]:bg-white"
        />
        <ToolButton label="放大" className="w-[14px]">
          <svg width="8" height="8" viewBox="0 0 8 8" aria-hidden="true"><path d="M4 0V8M0 4H8" stroke="white" /></svg>
        </ToolButton>
        <span className="mr-[10px] ml-3">70%</span>
        <Caret className="mr-1 text-[#7f93a5]" />
        <ToolButton label="适合页面" className="w-[19px]"><Icon size={14}><path d="M1.500 1.500H16.500V16.500H1.500Z" stroke="white" strokeWidth="1.300" strokeDasharray="1.500 1.500" /><path d="M5 4.500H13V13.500H5Z" stroke="white" strokeWidth="1.500" /></Icon></ToolButton>
        <ToolButton label="适合宽度" className="w-[19px]"><Icon size={14}><path d="M1 2H17V16H1Z" stroke="white" strokeWidth="1.400" /><path d="M5 5H13V13H5ZM9 5V13M1 9H17" stroke="white" strokeWidth="1.500" /></Icon></ToolButton>
        <ToolButton label="适合选区" className="w-[19px]"><Icon size={14}><path d="M1.500 1.500H16.500V16.500H1.500Z" stroke="white" strokeWidth="1.300" strokeDasharray="1.500 1.500" /><circle cx="9" cy="7.500" r="4" stroke="white" strokeWidth="1.500" /><path d="M11.500 10L17 16.500" stroke="white" strokeWidth="2" /></Icon></ToolButton>
        <ToolButton label="网格" className="w-[19px]"><Icon size={14}><path d="M1 4.500H17M1 9H17M1 13.500H17M3.500 1V17M7.200 1V17M11 1V17M14.700 1V17" stroke="white" strokeWidth="1.400" /></Icon></ToolButton>
      </div>
      <svg width="10" height="10" viewBox="0 0 10 10" className="absolute right-1 bottom-1" aria-hidden="true">
        <path d="M8 0H10V2H8ZM8 4H10V6H8ZM8 8H10V10H8ZM4 4H6V6H4ZM4 8H6V10H4ZM0 8H2V10H0Z" fill="#dfe6ee" />
      </svg>
    </footer>
  );
}

export default function App() {
  return (
    <div className="flex h-screen flex-col overflow-hidden bg-[#fdfdfd] font-['Noto_Sans','Noto_Sans_CJK_SC',sans-serif]">
      <div className="flex min-h-0 flex-1 flex-col border border-b-0 border-[#cfcfcf]">
        <TitleBar />
        <MenuTabs />
        <Ribbon />
        <div className="flex min-h-0 flex-1">
          <LibraryPanel />
          <Workspace />
          <ToolStrip />
        </div>
      </div>
      <StatusBar />
    </div>
  );
}
